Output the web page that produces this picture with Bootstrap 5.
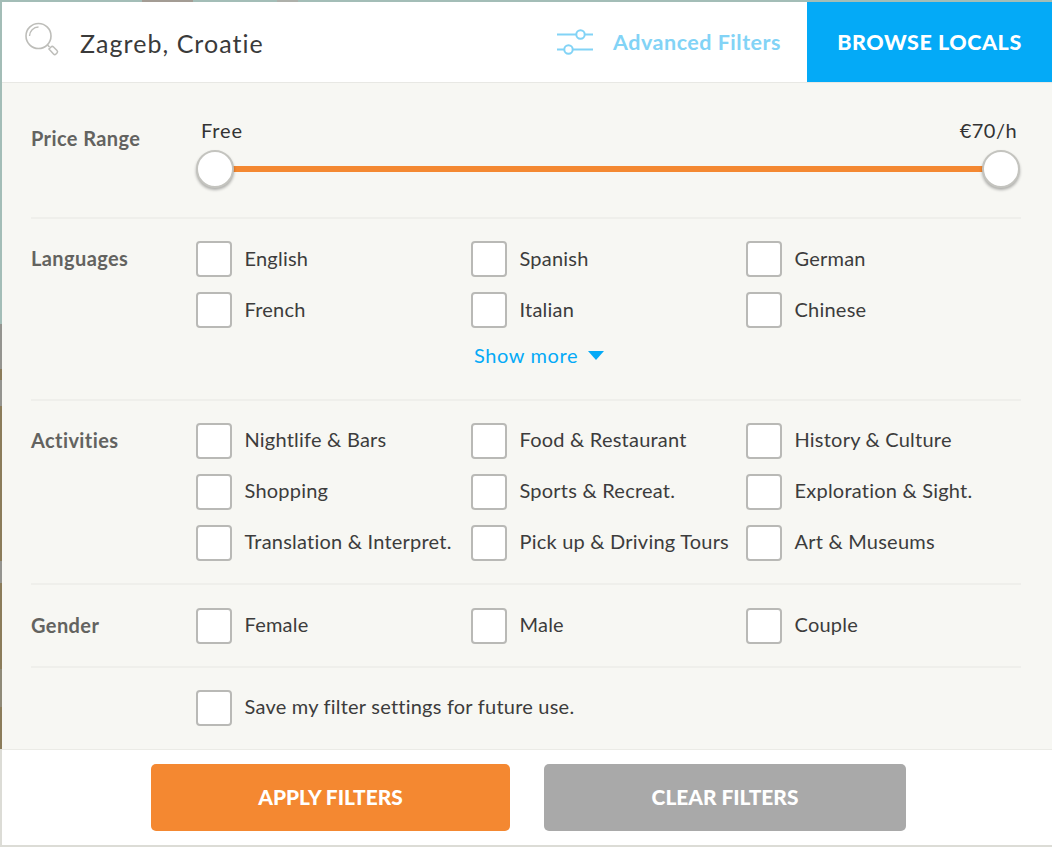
<!DOCTYPE html>
<html lang="en">
<head>
<meta charset="utf-8">
<title>Filters</title>
<link rel="stylesheet" href="https://cdn.jsdelivr.net/npm/bootstrap@5.3.0/dist/css/bootstrap.min.css">
<style>
html,body{height:847px;overflow:hidden}
body{background:linear-gradient(90deg,transparent 142px,#a39c94 142px,#a39c94 193px,transparent 193px,transparent 277px,#aeb0aa 277px,#aeb0aa 298px,transparent 298px) 0 0/100% 2px no-repeat,linear-gradient(180deg,#a3bdb7 0,#a3bdb7 324px,#94948f 324px,#94948f 369px,#8b7c5a 369px,#8b7c5a 380px,#94948f 380px,#94948f 406px,#8b7c5a 406px,#8b7c5a 561px,#94948f 561px,#94948f 583px,#8b7c5a 583px,#8b7c5a 669px,#8f8a78 669px,#8f8a78 707px,#8b7c5a 707px,#8b7c5a 749px,#dcdcd6 749px,#dcdcd6 847px);font-family:"Lato","Liberation Sans",sans-serif;color:#3c3c3c;font-size:20px;padding:2px 0 2px 2px}
.shell{height:843px;display:flex;flex-direction:column;background:#fff}
.topbar{height:81px;border-bottom:1px solid #e8e8e4;flex:none}
.search-ico{margin:0 0 4px 22px;flex:none}
.city{font-size:25px;margin-left:20px;letter-spacing:1.05px;color:#3a3a3a;padding-top:3px}
.adv{color:#82d3f6;font-size:21.5px;font-weight:700;letter-spacing:.5px;margin-right:26px}
.adv-ico{margin-right:19px}
.browse{width:245px;height:80px;background:#04aaf7;color:#fff;font-weight:900;font-size:21.5px;letter-spacing:.55px;border-radius:0;border:0;padding:0}
.browse:hover{background:#04aaf7;color:#fff}
.panel{flex:1;background:#f7f7f3;padding:0 31px 0 29px;border-bottom:1px solid #ebebe6}
.fsec{display:flex;border-bottom:2px solid #efefeb;padding-top:22px}
.fsec.last{border-bottom:0}
.sec-lang{height:182px}
.sec-act{height:184px}
.sec-gen{height:83px;padding-top:23px}
.flabel{width:165px;flex:none;color:#636360;font-weight:700;font-size:20px;letter-spacing:.4px;line-height:36px;margin-top:-1px}
.opts{display:grid;grid-template-columns:repeat(3,275px);row-gap:15px;width:825px;align-content:start}
.opt{display:flex;align-items:center;white-space:nowrap;height:36px;margin:0;font-size:20px;letter-spacing:.22px}
.opt-txt{padding-bottom:2px}
.sec-act .opt-txt,.sec-gen .opt-txt,.last .opt-txt{padding-bottom:4px}
.box{width:36px;height:36px;flex:none;appearance:none;background:#fff;border:2px solid #b9b9b6;border-radius:4px;margin:0 12.5px 0 0}
.pricesec{height:136px;padding-top:38px}
.sliderwrap{flex:1;min-width:0}
.ends{display:flex;justify-content:space-between;font-size:20px;line-height:24px;margin-top:-3px;padding:0 4px 0 5px;color:#333}
.ends span{letter-spacing:.45px}
.ends span:first-child{letter-spacing:.9px}
.track{position:relative;height:6px;background:#f48831;margin:24px 20px 0 19px}
.knob{position:absolute;top:-16px;width:38px;height:38px;border-radius:50%;background:#fff;border:2px solid #c4c4bf;box-shadow:0 2px 3px rgba(0,0,0,.3)}
.knob.a{left:-19px}
.knob.b{right:-19px}
.more{grid-column:2;display:flex;align-items:center;gap:10px;color:#04aaf7;text-decoration:none;font-size:20px;letter-spacing:.6px;height:32px;margin-top:-4px;padding-left:3px;white-space:nowrap}
.tri{width:0;height:0;border-left:8px solid transparent;border-right:8px solid transparent;border-top:9px solid #04aaf7}
.bottombar{height:95px;flex:none;background:#fff;gap:34px;padding:14px 0 0 149px;align-items:flex-start}
.act{height:67px;border:0;border-radius:5px;color:#fff;font-weight:900;font-size:20.9px;padding:0 0 2px}
.act.apply{width:359px;background:#f48831}
.act.apply:hover{background:#f48831;color:#fff}
.act.clear{width:362px;background:#a9a9a9}
.act.clear:hover{background:#a9a9a9;color:#fff}
</style>
</head>
<body>
<div class="shell">
  <div class="topbar d-flex align-items-center">
    <svg class="search-ico" width="36" height="36" viewBox="0 0 36 36" fill="none" stroke="#bdbdb9" aria-hidden="true">
      <circle cx="14.5" cy="14" r="12.500" stroke-width="1.6"/>
      <path d="M5.500 14a9 9 0 0 1 9-9" stroke-width="1.4"/>
      <path d="M23.500 23l2 2" stroke-width="1.6"/>
      <path d="M25 27l2-2a1.800 1.800 0 0 1 2.500 0l3.500 3.500a1.800 1.800 0 0 1 0 2.500l-1 1a1.800 1.800 0 0 1-2.500 0z" stroke-width="1.5"/>
    </svg>
    <div class="city">Zagreb, Croatie</div>
    <div class="ms-auto d-flex align-items-center">
      <svg class="adv-ico" width="38" height="28" viewBox="0 0 38 28" fill="none" stroke="#82d3f6" stroke-width="2" aria-hidden="true">
        <path d="M1 6.500h19M29 6.500h8M1 21.500h7M17 21.500h20"/>
        <circle cx="24.500" cy="6.500" r="4.200"/><circle cx="12.500" cy="21.500" r="4.200"/>
      </svg>
      <span class="adv">Advanced Filters</span>
      <button class="btn browse" type="button">BROWSE LOCALS</button>
    </div>
  </div>
  <div class="panel">
    <div class="fsec pricesec">
      <div class="flabel">Price Range</div>
      <div class="sliderwrap">
        <div class="ends"><span>Free</span><span>€70/h</span></div>
        <div class="track"><div class="knob a"></div><div class="knob b"></div></div>
      </div>
    </div>
    <div class="fsec sec-lang">
      <div class="flabel">Languages</div>
      <div class="opts">
        <label class="opt"><input class="box" type="checkbox"><span class="opt-txt">English</span></label>
        <label class="opt"><input class="box" type="checkbox"><span class="opt-txt">Spanish</span></label>
        <label class="opt"><input class="box" type="checkbox"><span class="opt-txt">German</span></label>
        <label class="opt"><input class="box" type="checkbox"><span class="opt-txt">French</span></label>
        <label class="opt"><input class="box" type="checkbox"><span class="opt-txt">Italian</span></label>
        <label class="opt"><input class="box" type="checkbox"><span class="opt-txt">Chinese</span></label>
        <a class="more" href="#">Show more <span class="tri"></span></a>
      </div>
    </div>
    <div class="fsec sec-act">
      <div class="flabel">Activities</div>
      <div class="opts">
        <label class="opt"><input class="box" type="checkbox"><span class="opt-txt">Nightlife &amp; Bars</span></label>
        <label class="opt"><input class="box" type="checkbox"><span class="opt-txt">Food &amp; Restaurant</span></label>
        <label class="opt"><input class="box" type="checkbox"><span class="opt-txt">History &amp; Culture</span></label>
        <label class="opt"><input class="box" type="checkbox"><span class="opt-txt">Shopping</span></label>
        <label class="opt"><input class="box" type="checkbox"><span class="opt-txt">Sports &amp; Recreat.</span></label>
        <label class="opt"><input class="box" type="checkbox"><span class="opt-txt">Exploration &amp; Sight.</span></label>
        <label class="opt"><input class="box" type="checkbox"><span class="opt-txt">Translation &amp; Interpret.</span></label>
        <label class="opt"><input class="box" type="checkbox"><span class="opt-txt">Pick up &amp; Driving Tours</span></label>
        <label class="opt"><input class="box" type="checkbox"><span class="opt-txt">Art &amp; Museums</span></label>
      </div>
    </div>
    <div class="fsec sec-gen">
      <div class="flabel">Gender</div>
      <div class="opts">
        <label class="opt"><input class="box" type="checkbox"><span class="opt-txt">Female</span></label>
        <label class="opt"><input class="box" type="checkbox"><span class="opt-txt">Male</span></label>
        <label class="opt"><input class="box" type="checkbox"><span class="opt-txt">Couple</span></label>
      </div>
    </div>
    <div class="fsec last">
      <div class="flabel"></div>
      <label class="opt"><input class="box" type="checkbox"><span class="opt-txt">Save my filter settings for future use.</span></label>
    </div>
  </div>
  <div class="bottombar d-flex">
    <button class="btn act apply" type="button">APPLY FILTERS</button>
    <button class="btn act clear" type="button">CLEAR FILTERS</button>
  </div>
</div>
<script src="https://cdn.jsdelivr.net/npm/bootstrap@5.3.0/dist/js/bootstrap.bundle.min.js"></script>
</body>
</html>
